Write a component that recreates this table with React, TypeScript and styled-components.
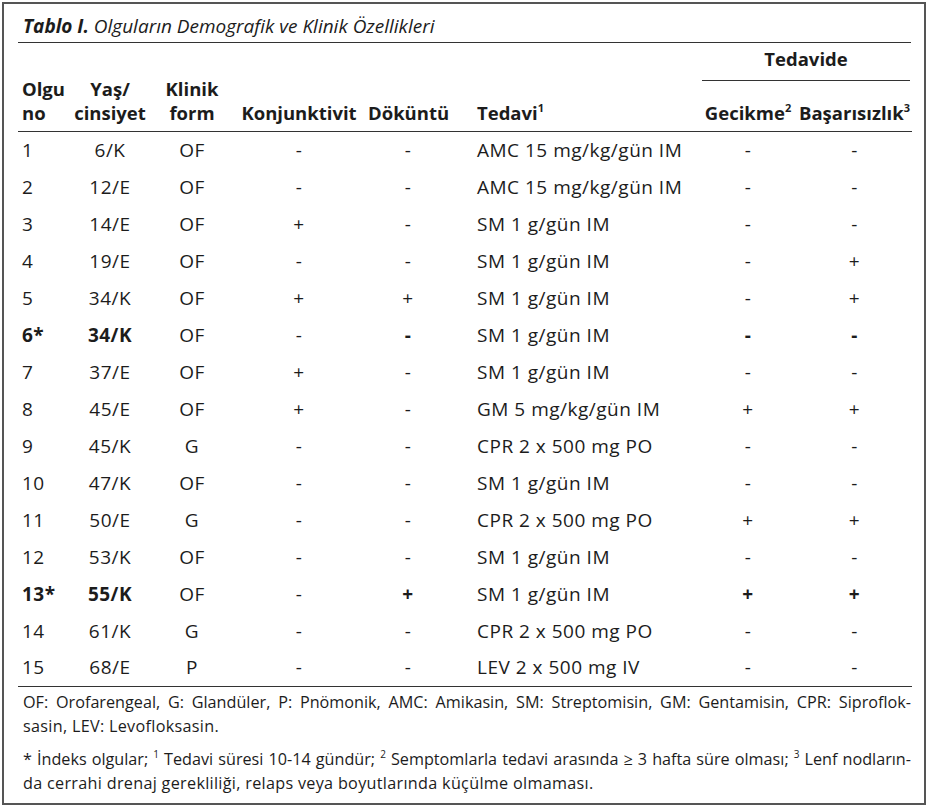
import styled, { createGlobalStyle } from "styled-components";

const GlobalStyle = createGlobalStyle`
  html, body {
    margin: 0;
    padding: 0;
    background: #fff;
  }
  body {
    font-family: "Open Sans", "Noto Sans", sans-serif;
    color: #1c1c1c;
  }
`;

const Frame = styled.div`
  box-sizing: border-box;
  margin: 2px;
  width: 924px;
  height: 803px;
  border: 2px solid #555;
  padding: 0 13px 0 14px;
`;

const Caption = styled.div`
  box-sizing: border-box;
  height: 39px;
  padding: 10px 0 0 5px;
  border-bottom: 1.5px solid #333;
  font-size: 19px;
  font-style: italic;
  line-height: 24px;

  b {
    font-weight: 700;
  }
`;

const Grid = styled.table`
  width: 100%;
  border-collapse: collapse;
  table-layout: fixed;
  font-size: 19px;
  line-height: 24px;
`;

const HeadRow = styled.tr<{ $h: number }>`
  height: ${(p) => p.$h}px;
`;

const Th = styled.th<{ $align?: string; $pl?: number }>`
  padding: 0 0 6px ${(p) => p.$pl ?? 0}px;
  font-size: 18.5px;
  font-weight: 700;
  text-align: ${(p) => p.$align ?? "center"};
  vertical-align: bottom;
  white-space: nowrap;
  border-bottom: 1.5px solid #333;

  sup {
    font-size: 11px;
    line-height: 0;
    vertical-align: 8px;
  }
`;

const GroupTh = styled.th`
  padding: 0;
  vertical-align: top;
  font-size: 18.5px;
  font-weight: 700;
`;

const GroupLabel = styled.div`
  margin: 0 2px 0 3px;
  padding: 4px 0 9px;
  border-bottom: 1.5px solid #333;
  text-align: center;
`;

const Row = styled.tr<{ $last?: boolean }>`
  height: 37px;
  border-bottom: ${(p) => (p.$last ? "1.5px solid #333" : "none")};
`;

const Td = styled.td<{ $align?: string; $pl?: number; $bold?: boolean }>`
  padding: 0 0 0 ${(p) => p.$pl ?? 0}px;
  text-align: ${(p) => p.$align ?? "center"};
  vertical-align: middle;
  white-space: nowrap;
  letter-spacing: 0.5px;
  font-weight: ${(p) => (p.$bold ? 700 : 400)};
`;

const Notes = styled.div`
  padding: 3px 0 0 5px;
  font-size: 16.2px;
  line-height: 24px;

  sup {
    font-size: 10px;
    line-height: 0;
    vertical-align: 7px;
  }
`;

const Para = styled.div`
  & + & {
    margin-top: 9px;
  }
`;

const Line = styled.div<{ $justify?: boolean }>`
  text-align: ${(p) => (p.$justify ? "justify" : "left")};
  text-align-last: ${(p) => (p.$justify ? "justify" : "left")};
  letter-spacing: ${(p) => (p.$justify ? 0 : 0.3)}px;
  white-space: nowrap;
`;

type Case = {
  no: string;
  age: string;
  form: string;
  konj: string;
  dok: string;
  tx: string;
  delay: string;
  fail: string;
  bold?: number[];
};

const cases: Case[] = [
  { no: "1", age: "6/K", form: "OF", konj: "-", dok: "-", tx: "AMC 15 mg/kg/gün IM", delay: "-", fail: "-" },
  { no: "2", age: "12/E", form: "OF", konj: "-", dok: "-", tx: "AMC 15 mg/kg/gün IM", delay: "-", fail: "-" },
  { no: "3", age: "14/E", form: "OF", konj: "+", dok: "-", tx: "SM 1 g/gün IM", delay: "-", fail: "-" },
  { no: "4", age: "19/E", form: "OF", konj: "-", dok: "-", tx: "SM 1 g/gün IM", delay: "-", fail: "+" },
  { no: "5", age: "34/K", form: "OF", konj: "+", dok: "+", tx: "SM 1 g/gün IM", delay: "-", fail: "+" },
  { no: "6*", age: "34/K", form: "OF", konj: "-", dok: "-", tx: "SM 1 g/gün IM", delay: "-", fail: "-", bold: [0, 1, 4, 6, 7] },
  { no: "7", age: "37/E", form: "OF", konj: "+", dok: "-", tx: "SM 1 g/gün IM", delay: "-", fail: "-" },
  { no: "8", age: "45/E", form: "OF", konj: "+", dok: "-", tx: "GM 5 mg/kg/gün IM", delay: "+", fail: "+" },
  { no: "9", age: "45/K", form: "G", konj: "-", dok: "-", tx: "CPR 2 x 500 mg PO", delay: "-", fail: "-" },
  { no: "10", age: "47/K", form: "OF", konj: "-", dok: "-", tx: "SM 1 g/gün IM", delay: "-", fail: "-" },
  { no: "11", age: "50/E", form: "G", konj: "-", dok: "-", tx: "CPR 2 x 500 mg PO", delay: "+", fail: "+" },
  { no: "12", age: "53/K", form: "OF", konj: "-", dok: "-", tx: "SM 1 g/gün IM", delay: "-", fail: "-" },
  { no: "13*", age: "55/K", form: "OF", konj: "-", dok: "+", tx: "SM 1 g/gün IM", delay: "+", fail: "+", bold: [0, 1, 4, 6, 7] },
  { no: "14", age: "61/K", form: "G", konj: "-", dok: "-", tx: "CPR 2 x 500 mg PO", delay: "-", fail: "-" },
  { no: "15", age: "68/E", form: "P", konj: "-", dok: "-", tx: "LEV 2 x 500 mg IV", delay: "-", fail: "-" },
];

// column widths, left to right, in px
const widths = [48, 88, 76, 138, 80, 251, 98, 115];

const App = () => {
  return (
    <>
      <GlobalStyle />
      <Frame>
        <Caption>
          <b>Tablo I.</b> Olguların Demografik ve Klinik Özellikleri
        </Caption>
        <Grid>
          <colgroup>
            {widths.map((w, i) => (
              <col key={i} style={{ width: w }} />
            ))}
          </colgroup>
          <thead>
            <HeadRow $h={37}>
              <Th rowSpan={2} $align="left" $pl={4}>
                Olgu
                <br />
                no
              </Th>
              <Th rowSpan={2}>
                Yaş/
                <br />
                cinsiyet
              </Th>
              <Th rowSpan={2}>
                Klinik
                <br />
                form
              </Th>
              <Th rowSpan={2}>Konjunktivit</Th>
              <Th rowSpan={2}>Döküntü</Th>
              <Th rowSpan={2} $align="left" $pl={29}>
                Tedavi<sup>1</sup>
              </Th>
              <GroupTh colSpan={2}>
                <GroupLabel>Tedavide</GroupLabel>
              </GroupTh>
            </HeadRow>
            <HeadRow $h={50}>
              <Th>
                Gecikme<sup>2</sup>
              </Th>
              <Th>
                Başarısızlık<sup>3</sup>
              </Th>
            </HeadRow>
          </thead>
          <tbody>
            {cases.map((c, r) => {
              const b = (i: number) => !!c.bold?.includes(i);
              return (
                <Row key={c.no} $last={r === cases.length - 1}>
                  <Td $align="left" $pl={4} $bold={b(0)}>{c.no}</Td>
                  <Td $bold={b(1)}>{c.age}</Td>
                  <Td $bold={b(2)}>{c.form}</Td>
                  <Td $bold={b(3)}>{c.konj}</Td>
                  <Td $bold={b(4)}>{c.dok}</Td>
                  <Td $align="left" $pl={29} $bold={b(5)}>{c.tx}</Td>
                  <Td $bold={b(6)}>{c.delay}</Td>
                  <Td $bold={b(7)}>{c.fail}</Td>
                </Row>
              );
            })}
          </tbody>
        </Grid>
        <Notes>
          <Para>
            <Line $justify>
              OF: Orofarengeal, G: Glandüler, P: Pnömonik, AMC: Amikasin, SM: Streptomisin, GM: Gentamisin, CPR: Siproflok-
            </Line>
            <Line>sasin, LEV: Levofloksasin.</Line>
          </Para>
          <Para>
            <Line $justify>
              * İndeks olgular; <sup>1</sup> Tedavi süresi 10-14 gündür; <sup>2</sup> Semptomlarla tedavi arasında ≥ 3
              hafta süre olması; <sup>3</sup> Lenf nodların-
            </Line>
            <Line>da cerrahi drenaj gerekliliği, relaps veya boyutlarında küçülme olmaması.</Line>
          </Para>
        </Notes>
      </Frame>
    </>
  );
};

export default App;
